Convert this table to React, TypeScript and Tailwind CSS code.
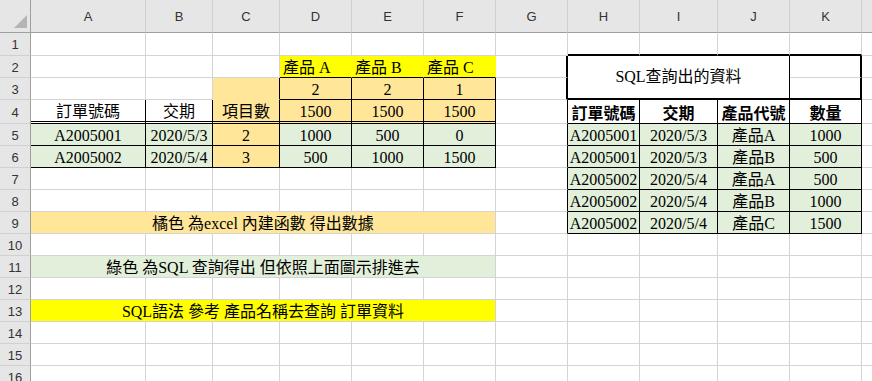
import React from 'react';

// Excel-style sheet: row header + columns A..K and a sliver of L
const SHEET_FONT = "font-['Liberation_Serif','Noto_Sans_CJK_TC',serif]";
const HEAD_FONT = "font-['Liberation_Sans',sans-serif]";

const COLS = ['A', 'B', 'C', 'D', 'E', 'F', 'G', 'H', 'I', 'J', 'K'];

type Cell = {
  t?: React.ReactNode;
  span?: string;
  bg?: string;
  r?: string;
  b?: string;
  v?: string;
  x?: string;
};

const GRID_R = 'border-r border-r-[#d4d4d4]';
const GRID_B = 'border-b border-b-[#d4d4d4]';
const BLACK_R = 'border-r border-r-black';
const BLACK_B = 'border-b border-b-black';
const THICK_R = 'border-r-2 border-r-black';
const THICK_B = 'border-b-2 border-b-black';
const DOUBLE_B = 'border-b-[3px] border-b-black border-double';

const YELLOW = 'bg-[#ffff00]';
const ORANGE = 'bg-[#ffe699]';
const GREEN = 'bg-[#e2efda]';

const blank = (n: number): Cell[] => Array.from({ length: n }, () => ({}));

// bordered data cell
const box = (t: React.ReactNode, bg?: string, x?: string): Cell => ({ t, bg, r: BLACK_R, b: BLACK_B, x });

const sqlRow = (id: string, date: string, prod: string, qty: string): Cell[] => [
  box(id, GREEN),
  box(date, GREEN),
  box(prod, GREEN),
  box(qty, GREEN),
];

const ROWS: Cell[][] = [
  // 1
  [...blank(7), { b: THICK_B }, { b: THICK_B }, { b: THICK_B }, { b: THICK_B }],
  // 2
  [
    ...blank(3),
    { t: '產品 A', bg: YELLOW, r: 'border-r border-r-[#ffff00]', b: BLACK_B, x: 'justify-start pl-[3px]' },
    { t: '產品 B', bg: YELLOW, r: 'border-r border-r-[#ffff00]', b: BLACK_B, x: 'justify-start pl-[3px]' },
    { t: '產品 C', bg: YELLOW, r: 'border-r border-r-[#ffff00]', b: BLACK_B, x: 'justify-start pl-[3px]' },
    { r: THICK_R },
    { t: 'SQL查詢出的資料', span: 'col-span-3 row-span-2', r: BLACK_R, b: THICK_B, v: 'items-center' },
    { r: THICK_R },
  ],
  // 3
  [
    ...blank(2),
    { bg: ORANGE, r: BLACK_R, b: 'border-b border-b-[#ffe699]' },
    box('2', ORANGE),
    box('2', ORANGE),
    box('1', ORANGE),
    { r: THICK_R },
    { r: THICK_R, b: THICK_B },
  ],
  // 4
  [
    { t: '訂單號碼', r: BLACK_R, b: DOUBLE_B },
    { t: '交期', r: BLACK_R, b: DOUBLE_B },
    { t: '項目數', bg: ORANGE, r: BLACK_R, b: DOUBLE_B },
    { t: '1500', bg: ORANGE, r: BLACK_R, b: DOUBLE_B },
    { t: '1500', bg: ORANGE, r: BLACK_R, b: DOUBLE_B },
    { t: '1500', bg: ORANGE, r: BLACK_R, b: DOUBLE_B },
    { r: BLACK_R },
    box('訂單號碼', undefined, 'font-bold'),
    box('交期', undefined, 'font-bold'),
    box('產品代號', undefined, 'font-bold'),
    box('數量', undefined, 'font-bold'),
  ],
  // 5
  [
    box('A2005001', GREEN),
    box('2020/5/3', GREEN),
    box('2', ORANGE),
    box('1000', GREEN),
    box('500', GREEN),
    box('0', GREEN),
    { r: BLACK_R },
    ...sqlRow('A2005001', '2020/5/3', '產品A', '1000'),
  ],
  // 6
  [
    box('A2005002', GREEN),
    box('2020/5/4', GREEN),
    box('3', ORANGE),
    box('500', GREEN),
    box('1000', GREEN),
    box('1500', GREEN),
    { r: BLACK_R },
    ...sqlRow('A2005001', '2020/5/3', '產品B', '500'),
  ],
  // 7
  [...blank(6), { r: BLACK_R }, ...sqlRow('A2005002', '2020/5/4', '產品A', '500')],
  // 8
  [...blank(6), { r: BLACK_R }, ...sqlRow('A2005002', '2020/5/4', '產品B', '1000')],
  // 9
  [
    { t: '橘色 為excel 內建函數 得出數據', span: 'col-span-6', bg: ORANGE },
    { r: BLACK_R },
    ...sqlRow('A2005002', '2020/5/4', '產品C', '1500'),
  ],
  // 10
  blank(11),
  // 11
  [{ t: '綠色 為SQL 查詢得出 但依照上面圖示排進去', span: 'col-span-6', bg: GREEN }, ...blank(5)],
  // 12
  blank(11),
  // 13
  [{ t: 'SQL語法 參考 產品名稱去查詢 訂單資料', span: 'col-span-6', bg: YELLOW }, ...blank(5)],
  // 14-16
  blank(11),
  blank(11),
  blank(11),
];

function SheetCell({ cell }: { cell: Cell }) {
  const cls = [
    'flex justify-center leading-4 whitespace-nowrap overflow-hidden text-black',
    cell.v ?? 'items-end pb-px',
    cell.span ?? '',
    cell.bg ?? 'bg-white',
    cell.r ?? GRID_R,
    cell.b ?? GRID_B,
    cell.x ?? '',
  ].join(' ');
  return <div className={cls}>{cell.t}</div>;
}

function Corner() {
  return (
    <div className="flex items-end justify-end pr-[3px] pb-[4px] bg-[#e6e6e6] border-r border-r-[#9e9e9e] border-b border-b-[#9e9e9e]">
      <svg width="13" height="13" viewBox="0 0 13 13">
        <polygon points="13,0 13,13 0,13" fill="#b4b4b4" />
      </svg>
    </div>
  );
}

export default function App() {
  return (
    <div className="w-[872px] h-[381px] overflow-hidden bg-white">
      <div
        className={`grid grid-cols-[31px_115px_67px_67px_72px_72px_72px_72px_72px_78px_72px_72px_1fr] grid-rows-[33px_23px_22px_22px_24px_repeat(12,22px)] text-[16px] ${SHEET_FONT}`}
      >
        {/* column headers */}
        <Corner />
        {COLS.map((c) => (
          <div
            key={c}
            className={`flex items-center justify-center pt-[2px] bg-[#e6e6e6] text-[13px] text-[#333] border-r border-r-[#d0d0d0] border-b border-b-[#9e9e9e] ${HEAD_FONT}`}
          >
            {c}
          </div>
        ))}
        <div className="bg-[#e6e6e6] border-b border-b-[#9e9e9e]" />

        {ROWS.map((row, i) => (
          <React.Fragment key={i}>
            <div
              className={`flex items-center justify-center pt-[2px] bg-[#e6e6e6] text-[13px] text-[#333] border-r border-r-[#9e9e9e] border-b border-b-[#d0d0d0] ${HEAD_FONT}`}
            >
              {i + 1}
            </div>
            {row.map((cell, j) => (
              <SheetCell key={j} cell={cell} />
            ))}
            <div className="bg-white border-b border-b-[#d4d4d4]" />
          </React.Fragment>
        ))}
      </div>
    </div>
  );
}
